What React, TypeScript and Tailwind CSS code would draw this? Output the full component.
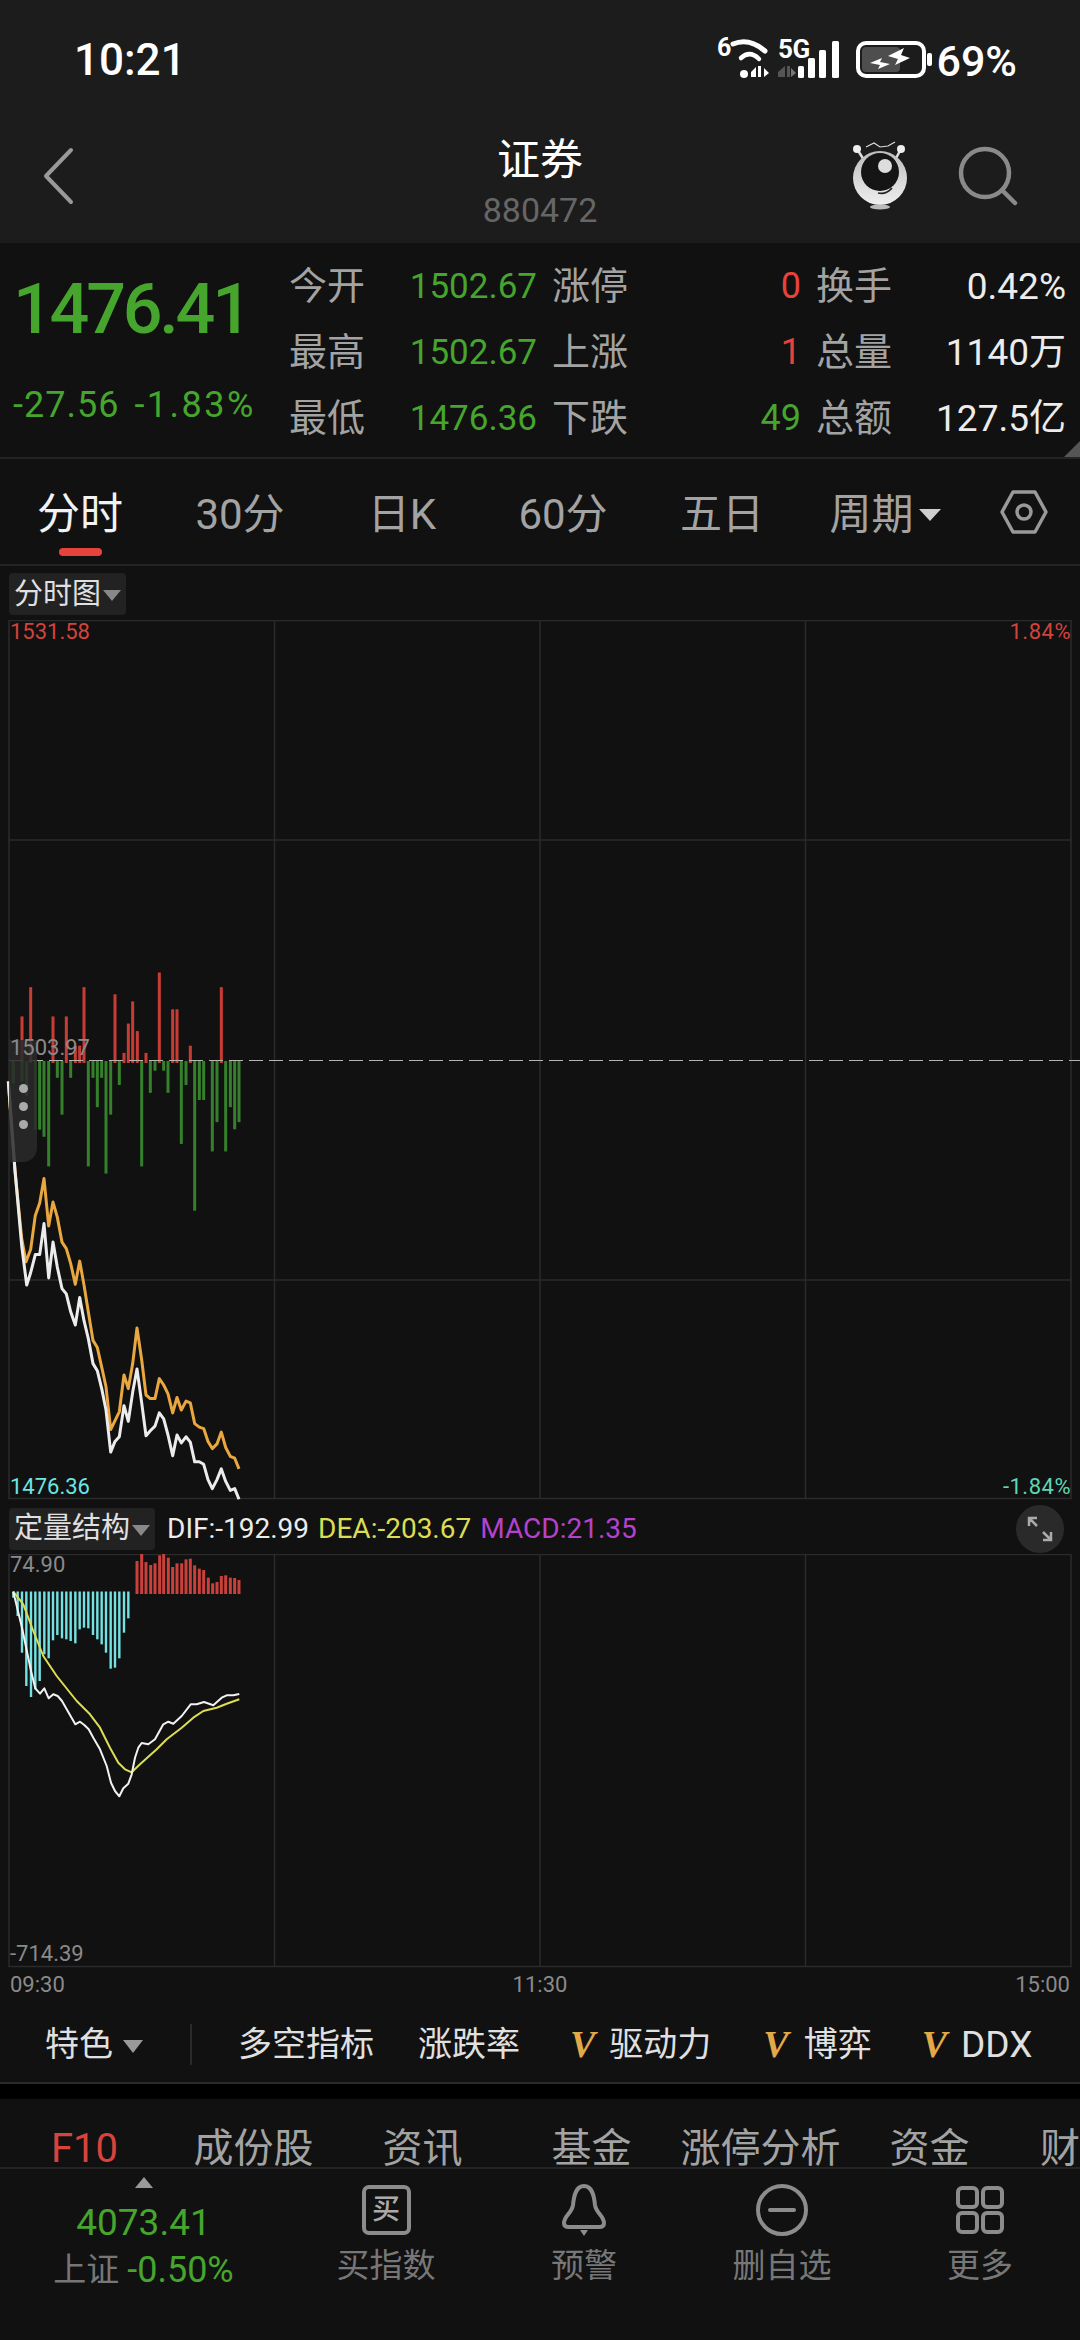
const up = "text-[#e5433b]";
const down = "text-[#46a52d]";

// chart data, read off the screenshot (x, y in page pixels)
const toUpper = (pts: number[][]) => pts.map(([x, y]) => `${(x / 3).toFixed(1)},${(960 + y / 2.8).toFixed(1)}`).join(" ");
const toLower = (pts: number[][]) => pts.map(([x, y]) => `${(x / 3).toFixed(1)},${(1560 + y / 3).toFixed(1)}`).join(" ");

const orangeLine = [[25,340],[45,590],[65,780],[78,845],[92,810],[106,715],[119,680],[132,612],[146,745],[159,678],[172,720],[186,790],[199,808],[212,850],[226,908],[239,843],[252,910],[265,985],[279,1065],[292,1085],[305,1140],[318,1195],[332,1315],[345,1290],[358,1265],[372,1162],[385,1200],[398,1130],[411,1030],[425,1120],[438,1218],[451,1228],[465,1228],[478,1172],[491,1190],[504,1215],[518,1268],[531,1225],[544,1260],[558,1235],[571,1240],[584,1298],[598,1308],[611,1312],[624,1348],[637,1368],[651,1355],[664,1322],[677,1365],[691,1390],[704,1395],[717,1425]];
const whiteLine = [[25,340],[45,590],[65,800],[80,910],[92,875],[106,825],[119,825],[132,738],[146,890],[159,790],[172,860],[186,920],[199,935],[212,985],[226,1022],[239,945],[252,1010],[265,1060],[279,1130],[292,1150],[305,1200],[318,1260],[332,1378],[345,1348],[358,1335],[372,1248],[385,1292],[398,1210],[411,1145],[425,1240],[438,1332],[451,1318],[465,1305],[478,1268],[491,1285],[504,1330],[518,1388],[531,1330],[544,1352],[558,1335],[571,1350],[584,1405],[598,1405],[611,1412],[624,1455],[637,1480],[651,1455],[664,1425],[677,1460],[691,1485],[704,1480],[717,1510]];
const redVol = [[66,158],[92,76],[159,158],[199,158],[226,240],[239,240],[252,76],[345,96],[372,260],[385,178],[398,116],[412,199],[438,260],[478,35],[518,138],[531,138],[571,240],[664,76]];
const greenVol = [[40,345],[66,340],[80,380],[106,475],[119,475],[132,495],[146,578],[172,330],[186,433],[212,330],[265,578],[279,330],[292,412],[305,330],[318,598],[332,433],[358,350],[425,578],[451,372],[465,310],[491,310],[504,372],[544,515],[558,350],[584,702],[598,392],[611,392],[637,536],[651,454],[677,536],[691,412],[704,474],[717,454]];

const cyanBars = [[40,110],[53,165],[66,275],[79,375],[93,408],[106,385],[119,360],[133,280],[146,292],[159,238],[172,222],[186,232],[199,235],[212,240],[226,247],[239,205],[252,200],[265,202],[279,222],[292,235],[305,250],[318,275],[332,323],[345,320],[358,292],[372,215],[385,172]];
const redBars = [[36,45],[50,22],[63,48],[77,57],[90,52],[104,28],[116,22],[130,35],[143,63],[156,52],[170,52],[183,40],[196,38],[209,58],[223,68],[236,72],[250,95],[263,112],[276,108],[289,90],[302,88],[316,95],[329,96],[342,102]];
const difLine = [[40,92],[66,200],[93,330],[106,382],[120,398],[133,382],[146,412],[160,400],[173,405],[186,420],[200,445],[226,490],[240,482],[253,492],[266,505],[280,530],[300,565],[320,615],[333,665],[345,690],[358,706],[370,682],[385,668],[395,640],[405,590],[415,560],[425,546],[445,550],[465,535],[490,490],[505,482],[520,488],[545,465],[572,430],[590,430],[612,423],[640,433],[665,410],[680,403],[700,403],[718,399]];
const deaLine = [[40,92],[70,130],[100,210],[130,285],[170,345],[230,420],[270,460],[300,500],[330,560],[355,605],[375,625],[395,634],[420,610],[470,565],[500,535],[545,500],[580,470],[610,450],[650,440],[680,428],[718,415]];

function StatusIcons() {
  return (
    <svg width="240" height="60" viewBox="710 30 240 60" className="block">
      <text x="717" y="56" fill="#fff" fontSize="25" fontWeight="700" fontFamily="Roboto">6</text>
      <g fill="none" stroke="#fff" strokeLinecap="round">
        <path d="M733 44 Q749 37 765 51" strokeWidth="5" />
        <path d="M741 58 Q750 50 759 59" strokeWidth="4.5" />
      </g>
      <circle cx="744" cy="74" r="4" fill="#fff" />
      <path d="M751 72 L756 67 V77 H751 Z M758 66 h3 v11 h-3 Z M764 68 L769 73 L764 77 Z" fill="#fff" />
      <text x="778" y="58" fill="#fff" fontSize="26" fontWeight="700" fontFamily="Roboto" letterSpacing="-0.5">5G</text>
      <path d="M778 72 L785 66 V77 H778 Z M787 66 h3 v11 h-3 Z" fill="#555" />
      <path d="M791 68 L796 73 L791 77 Z" fill="#777" />
      <rect x="798" y="66" width="6" height="12" rx="1.5" fill="#fff" />
      <rect x="808" y="58" width="7" height="20" rx="1.5" fill="#fff" />
      <rect x="819" y="50" width="7" height="28" rx="1.5" fill="#fff" />
      <rect x="832" y="41" width="7" height="37" rx="1.5" fill="#fff" />
      <rect x="858" y="43" width="66" height="33" rx="8" fill="#1c1c1c" stroke="#fff" strokeWidth="4" />
      <rect x="862" y="47" width="38" height="25" rx="4" fill="#4e4e4e" />
      <path d="M870 63 L882 58 L880 62 L890 64 L878 69 L880 65 Z M888 56 L904 48 L901 55 L910 58 L895 65 L898 59 Z" fill="#fff" />
      <rect x="927" y="53" width="5" height="13" rx="2" fill="#fff" />
    </svg>
  );
}

function RobotIcon() {
  return (
    <svg width="80" height="80" viewBox="840 135 80 80" className="block">
      <defs>
        <linearGradient id="robot" x1="0" y1="0" x2="0" y2="1">
          <stop offset="0" stopColor="#bdbdbd" />
          <stop offset="1" stopColor="#efefef" />
        </linearGradient>
      </defs>
      <path d="M866 147 L874 143 L880 147 L888 146 L895 142" fill="none" stroke="#ddd" strokeWidth="1.2" />
      <path d="M857 149 L864 160 M901 149 L895 160" stroke="#ddd" strokeWidth="2.5" />
      <circle cx="857" cy="149" r="4" fill="#eee" />
      <circle cx="901" cy="149" r="4" fill="#eee" />
      <circle cx="880" cy="178" r="27" fill="url(#robot)" />
      <circle cx="880" cy="172" r="19" fill="#151515" />
      <circle cx="885" cy="166" r="7" fill="#ddd" />
      <path d="M878 193 Q886 195 892 188" fill="none" stroke="#222" strokeWidth="1.8" />
      <ellipse cx="880" cy="207" rx="10" ry="2.5" fill="#bbb" />
    </svg>
  );
}

function Arrow({ className }: { className: string }) {
  return <span className={`inline-block h-0 w-0 border-x-transparent ${className}`} />;
}

function UpperChart() {
  return (
    <div className="relative h-[880px] shrink-0">
      <svg width="1080" height="880" viewBox="0 620 1080 880" className="block">
        <g stroke="#2b2b2b" strokeWidth="1.5" fill="none">
          <rect x="9" y="620.5" width="1062" height="878" />
          <path d="M274.5 620V1499 M540 620V1499 M805.5 620V1499 M9 840H1071 M9 1280H1071" />
        </g>
        {redVol.map(([x, y]) => (
          <rect key={x} x={x / 3 - 1.5} y={960 + y / 2.8} width="3" height={1063 - (960 + y / 2.8)} fill="#c93c35" />
        ))}
        {greenVol.map(([x, y]) => (
          <rect key={x} x={x / 3 - 1.5} y="1061" width="3" height={960 + y / 2.8 - 1061} fill="#35802a" />
        ))}
        <path d="M9 1060.5H1080" stroke="#b5b5b5" strokeWidth="1.2" strokeDasharray="14 6" />
        <polyline points={toUpper(orangeLine)} fill="none" stroke="#e9a740" strokeWidth="3" strokeLinejoin="round" />
        <polyline points={toUpper(whiteLine)} fill="none" stroke="#ececec" strokeWidth="3" strokeLinejoin="round" />
      </svg>
      <span className="absolute left-[10px] top-[-1px] text-[22px] leading-[26px] text-[#d5423a]">1531.58</span>
      <span className="absolute right-[9px] top-[-1px] text-[22px] leading-[26px] tracking-[0.5px] text-[#d5423a]">1.84%</span>
      <span className="absolute bottom-[0px] left-[10px] text-[22px] leading-[26px] text-[#6fe3e3]">1476.36</span>
      <span className="absolute bottom-[0px] right-[9px] text-[22px] leading-[26px] tracking-[0.5px] text-[#5fd6b4]">-1.84%</span>
      {/* drawer handle on the left edge */}
      <div className="absolute left-[9px] top-[420px] flex h-[122px] w-[28px] flex-col items-center justify-end gap-[9px] rounded-br-[14px] bg-[#2a2a2a]/85 pb-[33px]">
        <span className="h-[9px] w-[9px] rounded-full bg-[#aaa]" />
        <span className="h-[9px] w-[9px] rounded-full bg-[#aaa]" />
        <span className="h-[9px] w-[9px] rounded-full bg-[#aaa]" />
      </div>
      <span className="absolute left-[10px] top-[415px] text-[22px] leading-[26px] text-[#8a8a8a]">1503.97</span>
    </div>
  );
}

function LowerChart() {
  return (
    <div className="relative h-[414px] shrink-0">
      <svg width="1080" height="414" viewBox="0 1553 1080 414" className="block">
        <g stroke="#2b2b2b" strokeWidth="1.5" fill="none">
          <rect x="9" y="1553.5" width="1062" height="412" />
          <path d="M274.5 1553V1966 M540 1553V1966 M805.5 1553V1966" />
        </g>
        {cyanBars.map(([x, y]) => (
          <rect key={x} x={x / 3 - 1.2} y={1590.5} width="2.4" height={y / 3 + 1560 - 1590.5} fill="#74e2e2" />
        ))}
        {redBars.map(([x, y]) => (
          <rect key={x} x={125 + x / 3 - 1.5} y={1545 + y / 3} width="3" height={48 - y / 3} fill="#c9413a" />
        ))}
        <polyline points={toLower(deaLine)} fill="none" stroke="#dcdc55" strokeWidth="2" strokeLinejoin="round" />
        <polyline points={toLower(difLine)} fill="none" stroke="#f2f2f2" strokeWidth="2" strokeLinejoin="round" />
      </svg>
      <span className="absolute left-[10px] top-[-2px] text-[22px] leading-[26px] text-[#8a8a8a]">74.90</span>
      <span className="absolute bottom-[1px] left-[10px] text-[22px] leading-[26px] text-[#8a8a8a]">-714.39</span>
    </div>
  );
}

function QuoteGrid() {
  const rows = [
    ["今开", "1502.67", "涨停", "0", up, "换手", "0.42%"],
    ["最高", "1502.67", "上涨", "1", up, "总量", "1140万"],
    ["最低", "1476.36", "下跌", "49", down, "总额", "127.5亿"],
  ];
  return (
    <div className="grid grid-cols-[76px_187px_78px_186px_78px_172px] grid-rows-[66px_66px_66px] items-center text-[38px] leading-none">
      {rows.map((r) => (
        <div key={r[0]} className="contents">
          <span className="whitespace-nowrap text-[#a3a3a3]">{r[0]}</span>
          <span className={`pr-[15px] text-right text-[35px] ${down}`}>{r[1]}</span>
          <span className="whitespace-nowrap text-[#a3a3a3]">{r[2]}</span>
          <span className={`pr-[15px] text-right text-[36px] ${r[4]}`}>{r[3]}</span>
          <span className="whitespace-nowrap text-[#a3a3a3]">{r[5]}</span>
          <span className="text-right text-[37px] text-[#ececec]">{r[6]}</span>
        </div>
      ))}
    </div>
  );
}

function Tabs() {
  const tabs = ["30分", "日K", "60分", "五日"];
  return (
    <div className="grid h-[107px] shrink-0 grid-cols-[160px_160px_164px_158px_160px_166px_1fr] items-center border-b-2 border-[#242424] pt-[6px] text-[42px] leading-none text-[#a3a3a3]">
      <div className="relative flex h-full items-center justify-center text-[43px] text-[#f2f2f2]">
        分时
        <span className="absolute bottom-[8px] left-[59px] h-[8px] w-[43px] rounded-full bg-[#e5433b]" />
      </div>
      {tabs.map((t) => (
        <div key={t} className="text-center">{t}</div>
      ))}
      <div className="flex items-center justify-center gap-[5px]">
        周期
        <Arrow className="border-x-[11px] border-t-[12px] border-t-[#cfcfcf]" />
      </div>
      <div className="flex justify-center">
        <svg width="48" height="44" viewBox="0 0 48 44" fill="none" stroke="#999" strokeWidth="3.5" className="-mt-[6px]">
          <path d="M13 2 H35 L46 22 L35 42 H13 L2 22 Z" strokeLinejoin="round" />
          <circle cx="24" cy="22" r="7" />
        </svg>
      </div>
    </div>
  );
}

function Chip({ label }: { label: string }) {
  return (
    <div className="flex h-[42px] items-center gap-[2px] rounded-[4px] bg-[#222] pl-[5px] pr-[5px] text-[29px] leading-none text-[#e0e0e0]">
      {label}
      <Arrow className="mt-[3px] border-x-[9px] border-t-[11px] border-t-[#888]" />
    </div>
  );
}

function Indicators() {
  const vip = "font-['Liberation_Serif',serif] text-[38px] font-bold italic text-[#e3a948]";
  return (
    <div className="flex h-[78px] shrink-0 items-center border-b-2 border-[#2a2a2a] text-[34px] leading-none text-[#e0e0e0]">
      <span className="ml-[45px]">特色</span>
      <Arrow className="ml-[10px] mt-[5px] border-x-[10px] border-t-[13px] border-t-[#999]" />
      <span className="ml-[47px] h-[41px] w-[2px] bg-[#2a2a2a]" />
      <span className="ml-[46px]">多空指标</span>
      <span className="ml-[44px]">涨跌率</span>
      <span className={`ml-[50px] ${vip}`}>V</span>
      <span className="ml-[14px]">驱动力</span>
      <span className={`ml-[52px] ${vip}`}>V</span>
      <span className="ml-[15px]">博弈</span>
      <span className={`ml-[50px] ${vip}`}>V</span>
      <span className="ml-[14px] text-[37px]">DDX</span>
    </div>
  );
}

function BottomTabs() {
  const items = ["F10", "成份股", "资讯", "基金", "涨停分析", "资金"];
  return (
    <div className="flex h-[68px] shrink-0 items-start overflow-hidden pt-[27px] text-[40px] leading-[46px] text-[#a3a3a3]">
      {items.map((t, i) => (
        <div key={t} className={`w-[169px] shrink-0 whitespace-nowrap text-center ${i === 0 ? "text-[#d8433b]" : ""}`}>
          {t}
        </div>
      ))}
      <div className="ml-[26px] shrink-0 whitespace-nowrap">财务</div>
    </div>
  );
}

function ActionBar() {
  const stroke = { fill: "none", stroke: "#8c8c8c", strokeWidth: 4 };
  const actions = [
    {
      label: "买指数",
      icon: (
        <div className="flex h-[50px] w-[49px] items-center justify-center rounded-[7px] border-[4px] border-[#8c8c8c] text-[28px] font-medium leading-none text-[#aaa]">买</div>
      ),
    },
    {
      label: "预警",
      icon: (
        <svg width="46" height="54" viewBox="0 0 46 54" {...stroke}>
          <path d="M23 3 C15 3 13 12 12 22 C11 30 3 33 3 40 C3 43 5 44 8 44 H38 C41 44 43 43 43 40 C43 33 35 30 34 22 C33 12 31 3 23 3 Z" strokeLinejoin="round" />
          <path d="M19 47 H27 L23 53 Z" fill="#8c8c8c" stroke="none" />
        </svg>
      ),
    },
    {
      label: "删自选",
      icon: (
        <svg width="52" height="52" viewBox="0 0 52 52" {...stroke}>
          <circle cx="26" cy="26" r="24" />
          <path d="M14 26 H38" strokeLinecap="round" />
        </svg>
      ),
    },
    {
      label: "更多",
      icon: (
        <svg width="48" height="48" viewBox="0 0 48 48" {...stroke}>
          <rect x="2" y="2" width="19" height="19" rx="4" />
          <rect x="27" y="2" width="19" height="19" rx="4" />
          <rect x="2" y="27" width="19" height="19" rx="4" />
          <rect x="27" y="27" width="19" height="19" rx="4" />
        </svg>
      ),
    },
  ];
  return (
    <div className="grid flex-1 grid-cols-[287px_198px_198px_198px_198px] border-t-2 border-[#242424]">
      <div className="flex flex-col items-center pt-[8px]">
        <Arrow className="border-x-[9px] border-b-[11px] border-b-[#999]" />
        <span className={`mt-[13px] text-[37px] leading-[44px] ${down}`}>4073.41</span>
        <div className="mt-[3px] flex items-center gap-[8px] leading-[44px]">
          <span className="text-[33px] text-[#777]">上证</span>
          <span className={`text-[36px] ${down}`}>-0.50%</span>
        </div>
      </div>
      {actions.map((a) => (
        <div key={a.label} className="flex flex-col items-center">
          <div className="flex h-[82px] items-center">{a.icon}</div>
          <span className="mt-[-5px] text-[33px] leading-[40px] text-[#777]">{a.label}</span>
        </div>
      ))}
    </div>
  );
}

export default function App() {
  return (
    <div className="flex h-[2340px] w-[1080px] flex-col overflow-hidden bg-[#111] font-['Roboto','Noto_Sans_CJK_SC',sans-serif]">
      {/* status bar + nav */}
      <div className="h-[243px] shrink-0 bg-[#1c1c1c]">
        <div className="flex h-[120px] items-start justify-between pl-[74px] pr-[63px]">
          <span className="mt-[35px] text-[44px] font-medium leading-[50px] text-white">10:21</span>
          <div className="mt-[30px] flex items-start">
            <StatusIcons />
            <span className="ml-[-14px] mt-[6px] text-[43px] font-medium leading-[50px] text-white">69%</span>
          </div>
        </div>
        <div className="relative flex flex-col items-center">
          <span className="mt-[14px] text-[43px] leading-[52px] text-white">证券</span>
          <span className="mt-[4px] text-[34px] leading-[40px] text-[#666]">880472</span>
          <svg width="34" height="58" viewBox="0 0 34 58" fill="none" stroke="#999" strokeWidth="4" strokeLinecap="round" strokeLinejoin="round" className="absolute left-[41px] top-[27px]">
            <path d="M30 3 L5 29 L30 55" />
          </svg>
          <div className="absolute left-[840px] top-[15px]">
            <RobotIcon />
          </div>
          <svg width="62" height="62" viewBox="0 0 62 62" fill="none" stroke="#8a8a8a" strokeWidth="4.5" strokeLinecap="round" className="absolute left-[957px] top-[25px]">
            <circle cx="28" cy="28" r="24" />
            <path d="M45 45 L58 58" />
          </svg>
        </div>
      </div>

      {/* quote panel */}
      <div className="relative flex h-[216px] shrink-0 border-b-2 border-[#242424] pt-[10px]">
        <div className="w-[289px] shrink-0 pl-[13px]">
          <div className={`mt-[14px] text-[70px] font-medium leading-[84px] tracking-[-3.2px] ${down}`}>1476.41</div>
          <div className={`mt-[34px] flex gap-[15px] whitespace-nowrap text-[36px] leading-[40px] tracking-[1px] ${down}`}>
            <span>-27.56</span>
            <span className="tracking-[2.5px]">-1.83%</span>
          </div>
        </div>
        <QuoteGrid />
        <span className="absolute bottom-0 right-0 h-0 w-0 border-b-[16px] border-l-[16px] border-b-[#555] border-l-transparent" />
      </div>

      <Tabs />

      {/* time-share chart */}
      <div className="flex h-[54px] shrink-0 items-start pl-[9px] pt-[7px]">
        <Chip label="分时图" />
      </div>
      <UpperChart />

      {/* MACD chart */}
      <div className="flex h-[54px] shrink-0 items-center pl-[9px] pt-[3px] text-[28px] leading-none">
        <Chip label="定量结构" />
        <span className="ml-[12px] text-[#ececec]">DIF:-192.99</span>
        <span className="ml-[9px] text-[#dcdc55]">DEA:-203.67</span>
        <span className="ml-[9px] text-[#b542cc]">MACD:21.35</span>
        <div className="ml-auto mr-[16px] flex h-[48px] w-[48px] items-center justify-center rounded-full bg-[#2a2a2a]">
          <svg width="28" height="28" viewBox="0 0 28 28" fill="none" stroke="#aaa" strokeWidth="2.5">
            <path d="M3 11 V3 H11 M3 3 L11 11 M25 17 V25 H17 M25 25 L17 17" />
          </svg>
        </div>
      </div>
      <LowerChart />

      <div className="flex h-[38px] shrink-0 items-start justify-between px-[10px] pt-[4px] text-[22px] leading-[26px] text-[#8a8a8a]">
        <span>09:30</span>
        <span>11:30</span>
        <span>15:00</span>
      </div>

      <Indicators />
      <div className="h-[15px] shrink-0 bg-black" />
      <BottomTabs />
      <ActionBar />
    </div>
  );
}
